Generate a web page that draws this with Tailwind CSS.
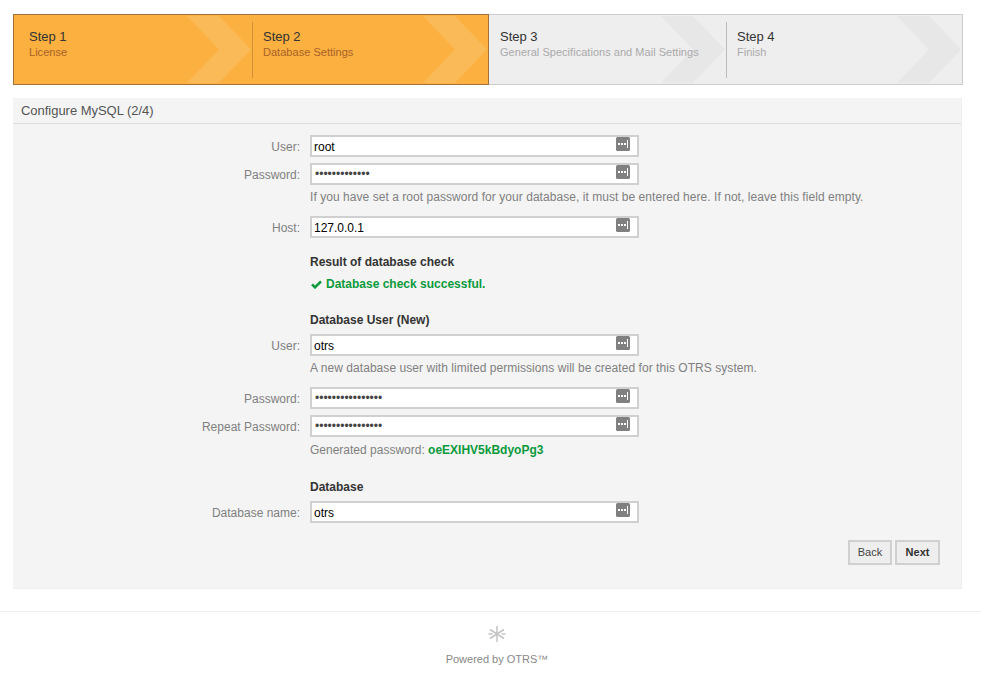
<!DOCTYPE html>
<html lang="en">
<head>
  <meta charset="UTF-8" />
  <title>Configure MySQL (2/4)</title>
  <script src="https://cdn.jsdelivr.net/npm/@tailwindcss/browser@4"></script>
</head>
<body class="bg-white text-[12px] text-[#333] font-['Liberation_Sans',Arial,sans-serif] overflow-hidden h-[679px]">

  <!-- Steps -->
  <div class="flex ml-[13px] mt-[14px] w-[950px] h-[71px]">
    <div class="flex w-[476px] border border-[#a3703a] bg-[#fbb03f]">
      <div class="relative w-[239px] pl-[15px] pt-[14px] overflow-hidden">
        <svg class="absolute left-[172px] top-0" width="66" height="69" viewBox="0 0 66 69"><path d="M1 1h32l32 33.5-32 33.5H1l32-33.5z" fill="#fbba58"/></svg>
        <div class="relative text-[13px] leading-[16px] text-[#333]">Step 1</div>
        <div class="relative text-[11px] leading-[14px] tracking-[0.03px] text-[#a8622a]">License</div>
        <div class="absolute right-0 top-[7px] h-[56px] w-px bg-[#d09238]"></div>
      </div>
      <div class="relative flex-1 pl-[10px] pt-[14px] overflow-hidden">
        <svg class="absolute right-0 top-0" width="66" height="69" viewBox="0 0 66 69"><path d="M1 1h32l32 33.5-32 33.5H1l32-33.5z" fill="#fbba58"/></svg>
        <div class="relative text-[13px] leading-[16px] text-[#333]">Step 2</div>
        <div class="relative text-[11px] leading-[14px] tracking-[0.03px] text-[#a8622a]">Database Settings</div>
      </div>
    </div>
    <div class="flex flex-1 border border-l-0 border-[#ccc] bg-[#eeeeee]">
      <div class="relative w-[238px] pl-[11px] pt-[14px] overflow-hidden">
        <svg class="absolute left-[171px] top-0" width="66" height="69" viewBox="0 0 66 69"><path d="M1 1h32l32 33.5-32 33.5H1l32-33.5z" fill="#e7e7e7"/></svg>
        <div class="relative text-[13px] leading-[16px] text-[#333]">Step 3</div>
        <div class="relative text-[11px] leading-[14px] tracking-[0.03px] text-[#aaa]">General Specifications and Mail Settings</div>
        <div class="absolute right-0 top-[7px] h-[56px] w-px bg-[#bbb]"></div>
      </div>
      <div class="relative flex-1 pl-[10px] pt-[14px] overflow-hidden">
        <svg class="absolute right-0 top-0" width="66" height="69" viewBox="0 0 66 69"><path d="M1 1h32l32 33.5-32 33.5H1l32-33.5z" fill="#e7e7e7"/></svg>
        <div class="relative text-[13px] leading-[16px] text-[#333]">Step 4</div>
        <div class="relative text-[11px] leading-[14px] tracking-[0.03px] text-[#aaa]">Finish</div>
      </div>
    </div>
  </div>

  <!-- Panel -->
  <div class="ml-[13px] mt-[13px] w-[949px] h-[491px] bg-[#f4f4f4] border-r border-b border-[#eee]">
    <h2 class="h-[26px] pl-[8px] text-[13px] leading-[25px] tracking-[-0.03px] text-[#555] border-b border-[#ddd]">Configure MySQL (2/4)</h2>

    <form class="pt-[11px]">
      <div class="flex items-center h-[22px]">
        <label class="w-[287px] pt-[1px] text-right text-[#808080]">User:</label>
        <div class="relative ml-[10px] w-[329px] h-[22px]">
          <input type="text" value="root" class="w-full h-full bg-white border-2 border-[#d0d0d0] pl-[2px] pt-[1px] text-[12px] text-black" />
          <svg class="absolute right-[9px] top-[2px]" width="14" height="14" viewBox="0 0 14 14"><rect width="14" height="14" rx="1.5" fill="#808080"/><path d="M2 6h2v2H2zM5 6h2v2H5zM8 6h2v2H8zM11 3h1v8h-1z" fill="#fff"/></svg>
        </div>
      </div>
      <div class="flex items-center h-[22px] mt-[6px]">
        <label class="w-[287px] pt-[1px] text-right text-[#808080]">Password:</label>
        <div class="relative ml-[10px] w-[329px] h-[22px]">
          <input type="password" value="1234567890123" class="w-full h-full bg-white border-2 border-[#d0d0d0] pl-[3px] text-[12px] text-[#444]" />
          <svg class="absolute right-[9px] top-[2px]" width="14" height="14" viewBox="0 0 14 14"><rect width="14" height="14" rx="1.5" fill="#808080"/><path d="M2 6h2v2H2zM5 6h2v2H5zM8 6h2v2H8zM11 3h1v8h-1z" fill="#fff"/></svg>
        </div>
      </div>
      <p class="ml-[297px] mt-[5px] h-[14px] leading-[14px] tracking-[0.05px] text-[#808080]">If you have set a root password for your database, it must be entered here. If not, leave this field empty.</p>

      <div class="flex items-center h-[22px] mt-[12px]">
        <label class="w-[287px] pt-[1px] text-right text-[#808080]">Host:</label>
        <div class="relative ml-[10px] w-[329px] h-[22px]">
          <input type="text" value="127.0.0.1" class="w-full h-full bg-white border-2 border-[#d0d0d0] pl-[2px] pt-[1px] text-[12px] text-black" />
          <svg class="absolute right-[9px] top-[2px]" width="14" height="14" viewBox="0 0 14 14"><rect width="14" height="14" rx="1.5" fill="#808080"/><path d="M2 6h2v2H2zM5 6h2v2H5zM8 6h2v2H8zM11 3h1v8h-1z" fill="#fff"/></svg>
        </div>
      </div>

      <h4 class="ml-[297px] mt-[17px] h-[14px] leading-[14px] font-bold text-[#333]">Result of database check</h4>
      <p class="ml-[297px] mt-[8px] h-[14px] leading-[14px] font-bold text-[#0a9a3c] flex items-center gap-[4px]">
        <svg class="ml-[1px]" width="11" height="9" viewBox="0 0 11 9"><path d="M1 4.3l3 3L10 1.3" fill="none" stroke="#0a9a3c" stroke-width="2.6"/></svg>
        <span>Database check successful.</span>
      </p>

      <h4 class="ml-[297px] mt-[22px] h-[14px] leading-[14px] font-bold text-[#333]">Database User (New)</h4>
      <div class="flex items-center h-[22px] mt-[7px]">
        <label class="w-[287px] pt-[1px] text-right text-[#808080]">User:</label>
        <div class="relative ml-[10px] w-[329px] h-[22px]">
          <input type="text" value="otrs" class="w-full h-full bg-white border-2 border-[#d0d0d0] pl-[2px] pt-[1px] text-[12px] text-black" />
          <svg class="absolute right-[9px] top-[2px]" width="14" height="14" viewBox="0 0 14 14"><rect width="14" height="14" rx="1.5" fill="#808080"/><path d="M2 6h2v2H2zM5 6h2v2H5zM8 6h2v2H8zM11 3h1v8h-1z" fill="#fff"/></svg>
        </div>
      </div>
      <p class="ml-[297px] mt-[5px] h-[14px] leading-[14px] tracking-[0.05px] text-[#808080]">A new database user with limited permissions will be created for this OTRS system.</p>

      <div class="flex items-center h-[22px] mt-[12px]">
        <label class="w-[287px] pt-[1px] text-right text-[#808080]">Password:</label>
        <div class="relative ml-[10px] w-[329px] h-[22px]">
          <input type="password" value="oeEXIHV5kBdyoPg3" class="w-full h-full bg-white border-2 border-[#d0d0d0] pl-[3px] text-[12px] text-[#444]" />
          <svg class="absolute right-[9px] top-[2px]" width="14" height="14" viewBox="0 0 14 14"><rect width="14" height="14" rx="1.5" fill="#808080"/><path d="M2 6h2v2H2zM5 6h2v2H5zM8 6h2v2H8zM11 3h1v8h-1z" fill="#fff"/></svg>
        </div>
      </div>
      <div class="flex items-center h-[22px] mt-[6px]">
        <label class="w-[287px] pt-[1px] text-right text-[#808080]">Repeat Password:</label>
        <div class="relative ml-[10px] w-[329px] h-[22px]">
          <input type="password" value="oeEXIHV5kBdyoPg3" class="w-full h-full bg-white border-2 border-[#d0d0d0] pl-[3px] text-[12px] text-[#444]" />
          <svg class="absolute right-[9px] top-[2px]" width="14" height="14" viewBox="0 0 14 14"><rect width="14" height="14" rx="1.5" fill="#808080"/><path d="M2 6h2v2H2zM5 6h2v2H5zM8 6h2v2H8zM11 3h1v8h-1z" fill="#fff"/></svg>
        </div>
      </div>
      <p class="ml-[297px] mt-[6px] h-[14px] leading-[14px] text-[#808080]">Generated password: <strong class="text-[#0a9a3c]">oeEXIHV5kBdyoPg3</strong></p>

      <h4 class="ml-[297px] mt-[23px] h-[14px] leading-[14px] font-bold text-[#333]">Database</h4>
      <div class="flex items-center h-[22px] mt-[7px]">
        <label class="w-[287px] pt-[1px] text-right text-[#808080]">Database name:</label>
        <div class="relative ml-[10px] w-[329px] h-[22px]">
          <input type="text" value="otrs" class="w-full h-full bg-white border-2 border-[#d0d0d0] pl-[2px] pt-[1px] text-[12px] text-black" />
          <svg class="absolute right-[9px] top-[2px]" width="14" height="14" viewBox="0 0 14 14"><rect width="14" height="14" rx="1.5" fill="#808080"/><path d="M2 6h2v2H2zM5 6h2v2H5zM8 6h2v2H8zM11 3h1v8h-1z" fill="#fff"/></svg>
        </div>
      </div>

      <div class="flex justify-end gap-[3px] mt-[17px] pr-[21px]">
        <button type="button" class="w-[44px] h-[25px] bg-[#eeeeee] border-2 border-[#d0d0d0] text-[11px] text-[#444]">Back</button>
        <button type="button" class="w-[45px] h-[25px] bg-[#eeeeee] border-2 border-[#d0d0d0] text-[11px] font-bold text-[#333]">Next</button>
      </div>
    </form>
  </div>

  <!-- Footer -->
  <footer class="mt-[22px] pl-[13px] border-t border-[#eee] flex flex-col items-center">
    <svg class="mt-[13px]" width="18" height="18" viewBox="0 0 18 18" fill="none" stroke="#c4c4c4" stroke-width="1.5"><path d="M9 1v16M2 4.5l14 9M16 4.5l-14 9M0.5 9h4M13.5 9h4"/></svg>
    <div class="mt-[9px] text-[11px] leading-[14px] text-[#888]">Powered by OTRS™</div>
  </footer>

</body>
</html>
